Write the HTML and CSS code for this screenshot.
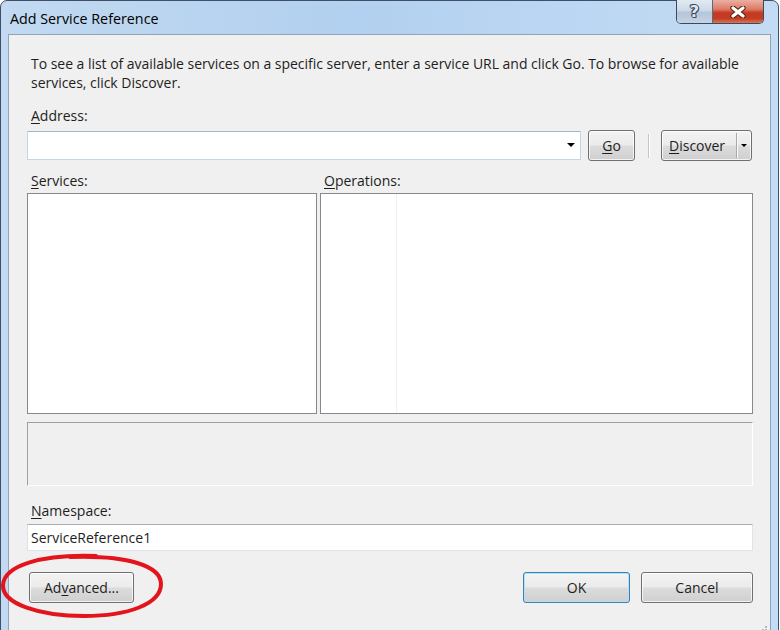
FILE: index.html
```html
<!DOCTYPE html>
<html>
<head>
<meta charset="utf-8">
<link rel="stylesheet" href="styles.css">
</head>
<body>
<div class="window">
  <div class="titlebar">
    <span class="title">Add Service Reference</span>
    <div class="caption">
      <div class="cap-help">?</div>
      <div class="cap-close">
        <svg width="16" height="12" viewBox="0 0 16 12"><path d="M3 2 L13 10 M13 2 L3 10" stroke="#5a2418" stroke-width="5.4" stroke-linecap="round"/><path d="M3 2 L13 10 M13 2 L3 10" stroke="#ffffff" stroke-width="3.2" stroke-linecap="round"/></svg>
      </div>
    </div>
  </div>
  <div class="client">
    <p class="intro">To see a list of available services on a specific server, enter a service URL and click Go. To browse for available<br>services, click Discover.</p>
    <div class="label label-address"><u>A</u>ddress:</div>
    <div class="address-row">
      <div class="combo">
        <span class="combo-arrow"></span>
      </div>
      <div class="btn btn-go"><u>G</u>o</div>
      <div class="sep"></div>
      <div class="btn btn-discover">
        <span class="disc-text"><u>D</u>iscover</span>
        <span class="disc-split"></span>
        <span class="disc-arrow"></span>
      </div>
    </div>
    <div class="lists">
      <div class="label"><u>S</u>ervices:</div>
      <div class="label"><u>O</u>perations:</div>
      <div class="listbox"></div>
      <div class="listbox ops"><div class="ops-col"></div></div>
    </div>
    <div class="desc"></div>
    <div class="label label-ns"><u>N</u>amespace:</div>
    <div class="textbox">ServiceReference1</div>
    <div class="bottom-row">
      <div class="btn btn-adv">Ad<u>v</u>anced...</div>
      <div class="spacer"></div>
      <div class="btn btn-ok">OK</div>
      <div class="btn btn-cancel">Cancel</div>
    </div>
    <svg class="grip" width="12" height="12" viewBox="0 0 12 12">
      <g fill="#b8b8b8"><rect x="9" y="1" width="2" height="2"/><rect x="6" y="4" width="2" height="2"/><rect x="9" y="4" width="2" height="2"/><rect x="3" y="7" width="2" height="2"/><rect x="6" y="7" width="2" height="2"/><rect x="9" y="7" width="2" height="2"/></g>
    </svg>
  </div>
  <svg class="circle" width="170" height="72" viewBox="0 0 170 72">
    <path d="M96 4 C 40 2, 4 14, 3 33 C 2 52, 40 64, 84 64 C 128 64, 161 52, 161 32 C 161 14, 128 3, 70 5" fill="none" stroke="#e3141c" stroke-width="4" stroke-linecap="round"/>
  </svg>
</div>
</body>
</html>
```

FILE: styles.css
```css
html, body {
  margin: 0;
  padding: 0;
}
body {
  width: 780px;
  height: 630px;
  overflow: hidden;
  background: #ffffff;
  font-family: "Open Sans", "Noto Sans", "DejaVu Sans", sans-serif;
  font-size: 14px;
  color: #000;
}
.window {
  position: relative;
  width: 777px;
  height: 640px;
  border: 1px solid #3e5067;
  border-radius: 7px 7px 0 0;
  background: linear-gradient(to right, #c2d9f1 0%, #b2d0ef 45%, #bcd7f3 75%, #c4dcf3 100%);
  display: flex;
  flex-direction: column;
  box-sizing: content-box;
}
.titlebar {
  height: 33px;
  display: flex;
  align-items: flex-start;
  padding-left: 9px;
}
.title {
  font-size: 14.3px;
  line-height: 33px;
  color: #000;
  margin-top: 1px;
}
.caption {
  margin-left: auto;
  margin-right: 14px;
  margin-top: -1px;
  display: flex;
  height: 23px;
  border: 1px solid #3a4a5e;
  border-top: none;
  border-radius: 0 0 5px 5px;
  overflow: hidden;
}
.cap-help {
  width: 35px;
  height: 23px;
  background: linear-gradient(to bottom, #e2eaf3 0%, #ccd9e7 45%, #b3c5d9 55%, #c4d4e5 100%);
  border-right: 1px solid #5c6c80;
  text-align: center;
  font-family: "DejaVu Sans", sans-serif;
  font-weight: bold;
  font-size: 16px;
  line-height: 23px;
  color: #dfe6ee;
  text-shadow: 1px 0 0 #3e4c5c, -1px 0 0 #3e4c5c, 0 1px 0 #3e4c5c, 0 -1px 0 #3e4c5c, 1px 1px 0 #3e4c5c, -1px -1px 0 #3e4c5c;
}
.cap-close {
  width: 50px;
  height: 23px;
  background: linear-gradient(to bottom, #eab0a3 0%, #dc7b66 40%, #c63a22 55%, #c23c22 80%, #db7556 100%);
  display: flex;
  align-items: center;
  justify-content: center;
}
.client {
  position: relative;
  margin: 0 7px;
  height: 585px;
  border: 1px solid #8fa3bb;
  background: #f0f0f0;
  padding: 19px 17px 0 18px;
}
.intro {
  margin: 0;
  padding-left: 4px;
  line-height: 19px;
  white-space: nowrap;
  color: #1e1e1e;
  letter-spacing: -0.03px;
}
.label {
  padding-left: 4px;
  line-height: 19px;
  color: #1e1e1e;
}
.label u, .btn u {
  text-decoration-thickness: 1px;
  text-underline-offset: 2px;
}
.label-address {
  margin-top: 14px;
}
.address-row {
  margin-top: 5px;
  height: 31px;
  display: flex;
  align-items: flex-start;
}
.combo {
  position: relative;
  margin-top: 1px;
  width: 552px;
  height: 27px;
  background: #fff;
  border: 1px solid #c4d5e9;
  border-top-color: #9fb6d4;
}
.combo-arrow {
  position: absolute;
  right: 5px;
  top: 11px;
  width: 0;
  height: 0;
  border-left: 4px solid transparent;
  border-right: 4px solid transparent;
  border-top: 4px solid #000;
}
.btn {
  box-sizing: border-box;
  height: 31px;
  border: 1px solid #707070;
  border-radius: 3px;
  background: linear-gradient(to bottom, #f3f3f3 0%, #ebebeb 48%, #dcdcdc 52%, #cfcfcf 100%);
  box-shadow: inset 0 0 0 1px rgba(255,255,255,0.75);
  display: flex;
  align-items: center;
  justify-content: center;
  color: #1e1e1e;
}
.btn-go {
  width: 47px;
  margin-left: 7px;
}
.sep {
  width: 1px;
  height: 24px;
  margin: 4px 11px 0 13px;
  background: #c2c6cc;
  border-right: 1px solid #fff;
}
.btn-discover {
  width: 91px;
  justify-content: flex-start;
  padding-left: 7px;
  position: relative;
}
.disc-split {
  position: absolute;
  left: 74px;
  top: 2px;
  bottom: 2px;
  width: 1px;
  background: #a9a9a9;
  border-right: 1px solid #fafafa;
}
.disc-arrow {
  position: absolute;
  left: 79px;
  top: 13px;
  border-left: 3px solid transparent;
  border-right: 3px solid transparent;
  border-top: 3px solid #000;
}
.lists {
  margin-top: 10px;
  display: grid;
  grid-template-columns: 290px 1fr;
  grid-template-rows: 19px 221px;
  column-gap: 3px;
  row-gap: 3px;
}
.listbox {
  box-sizing: border-box;
  background: #fff;
  border: 1px solid #848890;
}
.ops {
  display: flex;
}
.ops-col {
  width: 75px;
  border-right: 1px solid #eef1f6;
}
.desc {
  box-sizing: border-box;
  margin-top: 8px;
  height: 64px;
  background: #f0f0f0;
  border: 1px solid #ffffff;
  border-top-color: #a0a0a0;
  border-left-color: #a0a0a0;
}
.label-ns {
  margin-top: 15px;
}
.textbox {
  box-sizing: border-box;
  margin-top: 4px;
  height: 27px;
  background: #fff;
  border: 1px solid #e2e3ea;
  border-top-color: #abadb3;
  border-left-color: #dbdfe6;
  padding-left: 3px;
  line-height: 25px;
  color: #1e1e1e;
}
.bottom-row {
  margin-top: 21px;
  display: flex;
}
.btn-adv {
  width: 105px;
  margin-left: 2px;
}
.spacer {
  flex: 1;
}
.btn-ok {
  width: 107px;
  margin-right: 1px;
  border-color: #3c7fb1;
  box-shadow: inset 0 0 0 1px #b4e1f7;
}
.btn-cancel {
  width: 112px;
  margin-left: 10px;
}
.grip {
  position: absolute;
  right: 2px;
  bottom: 2px;
}
.circle {
  position: absolute;
  left: -1px;
  top: 551px;
}
```
